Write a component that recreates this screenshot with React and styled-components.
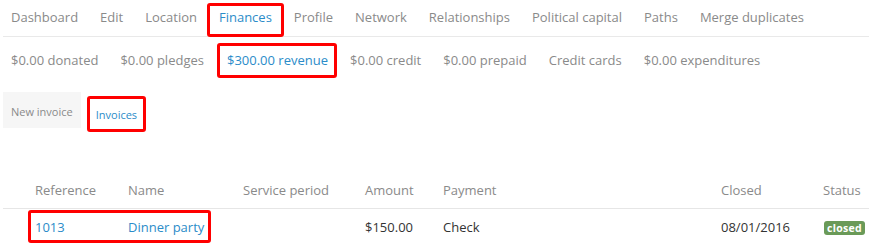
import React from 'react';
import styled, { createGlobalStyle, css } from 'styled-components';

const GlobalStyle = createGlobalStyle`
  body {
    margin: 0;
    background: #fff;
    font-family: "Open Sans", "Liberation Sans", sans-serif;
    color: #333;
  }
`;

const marked = css`
  outline: 3px solid #ff0000;
  outline-offset: -2px;
  border-radius: 2px;
`;

const Page = styled.div`
  padding: 0 3px;
  width: 872px;
  box-sizing: border-box;
`;

const Tabs = styled.nav`
  display: flex;
  height: 36px;
  border-bottom: 1px solid #e9e9e9;
`;

const Tab = styled.a`
  display: flex;
  align-items: center;
  padding: 0 11px 7px;
  margin-top: 4px;
  font-size: 13px;
  color: ${(p) => (p.$active ? '#2b8cc9' : '#8a8a8a')};
  ${(p) => p.$active && marked}

  &:first-child {
    padding-left: 8px;
  }
`;

const Totals = styled.div`
  display: flex;
  height: 46px;
  padding-top: 7px;
  box-sizing: border-box;
`;

const Total = styled.a`
  display: flex;
  align-items: center;
  padding: 0 ${(p) => (p.$active ? '8px' : '11px')} 2px ${(p) => (p.$active ? '9px' : '11px')};
  margin: 0 ${(p) => (p.$active ? '3px' : '0')};
  height: 33px;
  box-sizing: border-box;
  font-size: 13px;
  color: ${(p) => (p.$active ? '#2b8cc9' : '#8a8a8a')};
  ${(p) => p.$active && marked}

  &:first-child {
    padding-left: 8px;
  }
`;

const Pills = styled.div`
  display: flex;
  gap: 7px;
  margin-top: 9px;
  height: 38px;
  align-items: flex-start;
`;

const Pill = styled.a`
  display: flex;
  align-items: center;
  padding: ${(p) => (p.$active ? '0' : '3px')} 8px 0;
  box-sizing: border-box;
  height: ${(p) => (p.$active ? '34px' : '36px')};
  margin-top: ${(p) => (p.$active ? '5px' : '0')};
  font-size: 11px;
  color: ${(p) => (p.$active ? '#2b8cc9' : '#8a8a8a')};
  background: ${(p) => (p.$active ? '#fff' : '#f6f6f6')};
  ${(p) => p.$active && marked}
`;

const Table = styled.div`
  margin-top: 42px;
  font-size: 13px;
`;

const cols = '26px 93px 115px 122px 78px 278px 102px 1fr';

const HeadRow = styled.div`
  display: grid;
  grid-template-columns: ${cols};
  height: 36px;
  align-items: center;
  border-bottom: 1px solid #e6e6e6;
  color: #8a8a8a;
`;

const Row = styled.div`
  display: grid;
  grid-template-columns: ${cols};
  height: 36px;
  align-items: center;
`;

const Cell = styled.div`
  grid-row: 1;
  grid-column: ${(p) => p.$col};
  padding: 0 6px;
  white-space: nowrap;
`;

const Link = styled.a`
  color: #2b8cc9;
`;

const Highlight = styled.div`
  grid-row: 1;
  grid-column: 2 / 4;
  width: 181px;
  height: 31px;
  align-self: start;
  margin-top: 2px;
  box-sizing: border-box;
  pointer-events: none;
  ${marked}
`;

const Badge = styled.span`
  display: inline-block;
  margin-left: 1px;
  background: #6a9a58;
  color: #fff;
  font-size: 10.5px;
  font-weight: 700;
  line-height: 14px;
  padding: 0 3px;
  border-radius: 3px;
  letter-spacing: 0.3px;
`;

const tabs = ['Dashboard', 'Edit', 'Location', 'Finances', 'Profile', 'Network', 'Relationships', 'Political capital', 'Paths', 'Merge duplicates'];
const totals = ['$0.00 donated', '$0.00 pledges', '$300.00 revenue', '$0.00 credit', '$0.00 prepaid', 'Credit cards', '$0.00 expenditures'];
const headers = ['Reference', 'Name', 'Service period', 'Amount', 'Payment', 'Closed', 'Status'];

export default function App() {
  return (
    <Page>
      <GlobalStyle />
      <Tabs>
        {tabs.map((t) => (
          <Tab key={t} $active={t === 'Finances'}>{t}</Tab>
        ))}
      </Tabs>
      <Totals>
        {totals.map((t) => (
          <Total key={t} $active={t === '$300.00 revenue'}>{t}</Total>
        ))}
      </Totals>
      <Pills>
        <Pill>New invoice</Pill>
        <Pill $active>Invoices</Pill>
      </Pills>
      <Table>
        <HeadRow>
          {headers.map((h, i) => (
            <Cell key={h} $col={i + 2}>{h}</Cell>
          ))}
        </HeadRow>
        <Row>
          <Cell $col={2}><Link>1013</Link></Cell>
          <Cell $col={3}><Link>Dinner party</Link></Cell>
          <Highlight />
          <Cell $col={5}>$150.00</Cell>
          <Cell $col={6}>Check</Cell>
          <Cell $col={7}>08/01/2016</Cell>
          <Cell $col={8}><Badge>closed</Badge></Cell>
        </Row>
      </Table>
    </Page>
  );
}
